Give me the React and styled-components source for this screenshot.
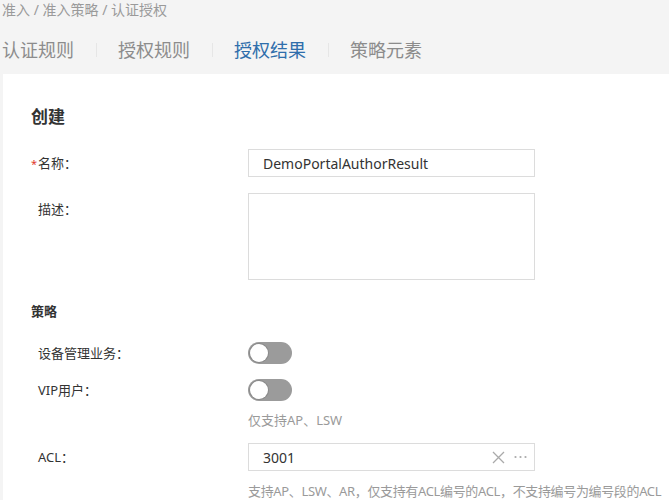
import React from 'react';
import styled, { createGlobalStyle } from 'styled-components';

const GlobalStyle = createGlobalStyle`
  html, body {
    margin: 0;
    padding: 0;
    overflow: hidden;
    background: #f4f4f4;
    font-family: "Noto Sans", "Noto Sans CJK SC", sans-serif;
    color: #333;
  }
`;

const Page = styled.div`
  width: 669px;
  height: 500px;
  display: flex;
  flex-direction: column;
`;

const Breadcrumb = styled.div`
  font-size: 14px;
  line-height: 20px;
  color: #9a9a9a;
  padding-left: 2px;
`;

const Tabs = styled.div`
  display: flex;
  align-items: center;
  height: 36px;
  margin-top: 12px;
`;

const Tab = styled.div`
  font-size: 18px;
  line-height: 36px;
  padding: 0 21.5px;
  color: ${(p) => (p.$active ? '#2f6eab' : '#8c8c8c')};
  &:first-child {
    padding-left: 2px;
  }
`;

const TabDivider = styled.span`
  width: 1px;
  height: 14px;
  background: #e6e6e6;
`;

const Card = styled.div`
  flex: 1;
  margin: 6px 0 0 3px;
  background: #fff;
  padding: 31px 0 0 28px;
  overflow: hidden;
`;

const Title = styled.h2`
  margin: 0;
  font-size: 17px;
  line-height: 24px;
  font-weight: 700;
  color: #333;
`;

const Row = styled.div`
  display: flex;
  align-items: ${(p) => (p.$top ? 'flex-start' : 'center')};
  margin-top: ${(p) => p.$mt}px;
`;

const Label = styled.label`
  width: 217px;
  flex: none;
  padding-left: 7px;
  box-sizing: border-box;
  font-size: 13px;
  line-height: ${(p) => (p.$top ? '32px' : '20px')};
  color: #333;
`;

const Star = styled.span`
  display: inline-block;
  width: 7px;
  margin-left: -7px;
  color: #e0392b;
  font-size: 11px;
`;

const InputBox = styled.div`
  width: 287px;
  height: 28px;
  box-sizing: border-box;
  border: 1px solid #dcdcdc;
  display: flex;
  align-items: center;
  padding: 0 7px 0 14px;
  font-size: 14px;
  color: #333;
`;

const InputText = styled.span`
  flex: 1;
`;

const TextArea = styled.div`
  width: 287px;
  height: 87px;
  box-sizing: border-box;
  border: 1px solid #dcdcdc;
`;

const Section = styled.div`
  margin-top: 20px;
  font-size: 13px;
  line-height: 22px;
  font-weight: 600;
  color: #333;
`;

const Toggle = styled.div`
  width: 44px;
  height: 22px;
  border-radius: 11px;
  background: #9b9b9b;
  display: flex;
  align-items: center;
  padding-left: 2px;
  box-sizing: border-box;
`;

const Knob = styled.span`
  width: 18px;
  height: 18px;
  border-radius: 50%;
  background: #fff;
  box-shadow: 0 0 0 1px #8a8a8a;
`;

const Hint = styled.div`
  margin: ${(p) => p.$mt}px 0 0 217px;
  font-size: 13px;
  line-height: 20px;
  letter-spacing: ${(p) => (p.$tight ? '-0.35px' : '0')};
  color: #9a9a9a;
  white-space: nowrap;
`;

const IconBtn = styled.span`
  display: flex;
  align-items: center;
  color: #aaa;
  margin-left: ${(p) => p.$ml || 0}px;
`;

export default function App() {
  return (
    <Page>
      <GlobalStyle />
      <Breadcrumb>准入 / 准入策略 / 认证授权</Breadcrumb>
      <Tabs>
        <Tab>认证规则</Tab>
        <TabDivider />
        <Tab>授权规则</Tab>
        <TabDivider />
        <Tab $active>授权结果</Tab>
        <TabDivider />
        <Tab>策略元素</Tab>
      </Tabs>
      <Card>
        <Title>创建</Title>
        <Row $mt={20}>
          <Label><Star>*</Star>名称：</Label>
          <InputBox><InputText>DemoPortalAuthorResult</InputText></InputBox>
        </Row>
        <Row $mt={16} $top>
          <Label $top>描述：</Label>
          <TextArea />
        </Row>
        <Section>策略</Section>
        <Row $mt={20}>
          <Label>设备管理业务：</Label>
          <Toggle><Knob /></Toggle>
        </Row>
        <Row $mt={15}>
          <Label>VIP用户：</Label>
          <Toggle><Knob /></Toggle>
        </Row>
        <Hint $mt={9}>仅支持AP、LSW</Hint>
        <Row $mt={13}>
          <Label>ACL：</Label>
          <InputBox>
            <InputText>3001</InputText>
            <IconBtn>
              <svg width="13" height="13" viewBox="0 0 13 13" fill="none" stroke="currentColor" strokeWidth="1.3">
                <path d="M1 1 L12 12 M12 1 L1 12" />
              </svg>
            </IconBtn>
            <IconBtn $ml={9}>
              <svg width="13" height="4" viewBox="0 0 13 4" fill="currentColor">
                <circle cx="1.5" cy="2" r="1.1" />
                <circle cx="6.5" cy="2" r="1.1" />
                <circle cx="11.5" cy="2" r="1.1" />
              </svg>
            </IconBtn>
          </InputBox>
        </Row>
        <Hint $mt={10} $tight>支持AP、LSW、AR，仅支持有ACL编号的ACL，不支持编号为编号段的ACL</Hint>
      </Card>
    </Page>
  );
}
